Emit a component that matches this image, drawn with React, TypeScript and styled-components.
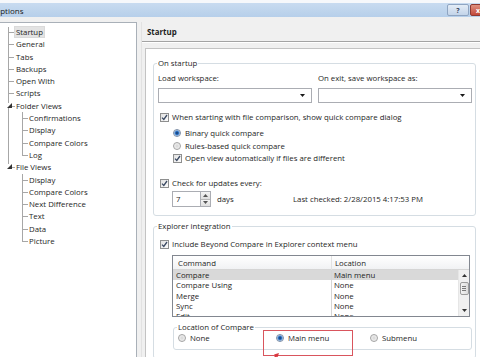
import React from 'react';
import styled, { createGlobalStyle } from 'styled-components';

const GlobalStyle = createGlobalStyle`
  html, body {
    margin: 0;
    padding: 0;
    background: #f0f0f0;
  }
  body {
    font-family: 'Open Sans', 'Noto Sans', sans-serif;
  }
  * {
    box-sizing: border-box;
  }
`;

const Window = styled.div`
  position: relative;
  width: 480px;
  height: 357px;
  overflow: hidden;
  display: flex;
  flex-direction: column;
  background: #f0f0f0;
  border-top: 3px solid #f6f8fb;
  color: #1e1e1e;
  font-size: 7.8px;
`;

const TitleBar = styled.div`
  flex: none;
  height: 14px;
  display: flex;
  align-items: center;
  justify-content: space-between;
  background: linear-gradient(#c8dbf0, #b6cfea);
`;

const TitleText = styled.span`
  margin-left: -6px;
  font-size: 8px;
  color: #1a1a1a;
`;

const CaptionButtons = styled.div`
  display: flex;
  gap: 1px;
  margin-right: -6px;
  align-self: flex-start;
  margin-top: 1px;
`;

const CaptionButton = styled.div<{ $close?: boolean }>`
  width: ${(p) => (p.$close ? '16px' : '22px')};
  height: 12px;
  border: 1px solid ${(p) => (p.$close ? '#8d3a32' : '#8fa5c2')};
  border-radius: 2px;
  background: ${(p) =>
    p.$close ? 'linear-gradient(#e0917f, #c2483a)' : 'linear-gradient(#e3ecf6, #c3d4e9)'};
  color: ${(p) => (p.$close ? '#fff' : '#34475f')};
  font-size: 7px;
  font-weight: bold;
  display: flex;
  align-items: center;
  justify-content: center;
  line-height: 1;
`;

const Body = styled.div`
  flex: 1;
  display: flex;
  padding-top: 5px;
  min-height: 0;
`;

/* ---------- tree ---------- */

const TreePanel = styled.div`
  flex: none;
  width: 137px;
  background: #fff;
  border: 1px solid #a9b0b8;
  border-left: none;
  border-bottom: none;
  padding-top: 3px;
`;

const TreeList = styled.ul`
  list-style: none;
  margin: 0;
  padding: 0;
`;

const TreeItem = styled.li<{ $indent: number; $last?: boolean }>`
  position: relative;
  &::before {
    content: '';
    position: absolute;
    left: ${(p) => (p.$indent ? 22 : 8)}px;
    top: ${(p) => (p.$indent ? 0 : 1)}px;
    height: ${(p) => (p.$last ? '6px' : '100%')};
    border-left: 1px solid #a7a7a7;
  }
`;

const TreeLabel = styled.div<{ $indent: number; $expander?: boolean }>`
  position: relative;
  height: 12.3px;
  line-height: 12.3px;
  padding-left: ${(p) => (p.$indent ? 29 : 16)}px;
  white-space: nowrap;
  &::before {
    content: '';
    position: absolute;
    left: ${(p) => (p.$indent ? 22 : p.$expander ? 12 : 8)}px;
    top: 6px;
    width: ${(p) => (p.$expander ? 3 : 6)}px;
    border-top: 1px solid #a7a7a7;
  }
`;

const TreeText = styled.span<{ $selected?: boolean }>`
  padding: 0 1px;
  margin-left: -1px;
  background: ${(p) => (p.$selected ? '#e3e3e3' : 'transparent')};
  outline: ${(p) => (p.$selected ? '1px solid #dadada' : 'none')};
`;

const Expander = styled.svg`
  position: absolute;
  left: 7px;
  top: 3px;
  width: 5px;
  height: 5px;
  background: #fff;
`;

/* ---------- right pane ---------- */

const RightPane = styled.div`
  flex: 1;
  display: flex;
  flex-direction: column;
  margin-left: 4px;
  border-left: 1px solid #e2e2e2;
  padding-left: 3px;
  min-width: 0;
`;

const PageHeader = styled.div`
  flex: none;
  height: 20px;
  line-height: 21px;
  padding-left: 5px;
  font-weight: bold;
  font-size: 7.9px;
  margin-left: -3px;
  border-bottom: 1px solid #a3a3a3;
  box-shadow: 0 1px 0 #ffffff;
`;

const ContentPanel = styled.div`
  flex: 1;
  margin-top: 6px;
  margin-right: -5px;
  background: #fff;
  border: 1px solid #c3c3c3;
  border-bottom: none;
  padding: 9px 8px 0 7px;
`;

const GroupBox = styled.fieldset<{ $gap?: number }>`
  margin: ${(p) => p.$gap ?? 0}px 0 0 0;
  padding: 0 3px 8px 4px;
  border: 1px solid #d5dde3;
  border-radius: 3px;
  min-width: 0;
`;

const InnerGroup = styled(GroupBox)`
  margin: 5px 0 0 15px;
  padding: 0 4px 5px 4px;
`;

const Legend = styled.legend`
  padding: 0 1px;
  margin-left: -1px;
  line-height: 10px;
  height: 10px;
`;

const ComboRow = styled.div`
  display: grid;
  grid-template-columns: 154px 154px;
  column-gap: 6px;
  margin-top: 5px;
`;

const FieldLabel = styled.div`
  line-height: 10px;
  height: 10px;
`;

const Combo = styled.div`
  margin-top: 5px;
  height: 15px;
  border: 1px solid #abadb3;
  background: #fff;
  display: flex;
  align-items: center;
  justify-content: flex-end;
  padding-right: 6px;
`;

const Arrow = styled.svg`
  width: 5px;
  height: 3px;
`;

const OptionRow = styled.div<{ $top: number; $indent?: number }>`
  display: flex;
  align-items: center;
  gap: 3px;
  height: 12px;
  margin-top: ${(p) => p.$top}px;
  margin-left: ${(p) => p.$indent ?? 2}px;
  white-space: nowrap;
`;

const CheckBox = styled.span`
  flex: none;
  width: 9px;
  height: 9px;
  border: 1px solid #8e8f8f;
  background: linear-gradient(135deg, #e2e2e2, #fbfbfb);
  display: flex;
  align-items: center;
  justify-content: center;
`;

const Radio = styled.span<{ $on?: boolean }>`
  flex: none;
  width: 8px;
  height: 8px;
  border-radius: 50%;
  border: 1px solid ${(p) => (p.$on ? '#7d8ea6' : '#a2a2a2')};
  background: ${(p) =>
    p.$on
      ? 'radial-gradient(circle, #0f2f58 0, #2c6fc0 1.6px, #8fb8e6 2.6px, #e6edf5 3.2px)'
      : 'radial-gradient(circle, #d5d5d5 0, #ececec 2.5px, #f8f8f8 4px)'};
  margin-right: 1px;
`;

const SpinRow = styled.div`
  display: flex;
  align-items: center;
  margin: 2px 0 0 14px;
  height: 16px;
  white-space: nowrap;
`;

const SpinGroup = styled.div`
  flex: none;
  width: 121px;
  display: flex;
  align-items: center;
`;

const SpinInput = styled.div`
  width: 28px;
  height: 16px;
  border: 1px solid #abadb3;
  border-right: none;
  background: #fff;
  padding-left: 3px;
  line-height: 14px;
`;

const SpinButtons = styled.div`
  width: 11px;
  height: 16px;
  display: flex;
  flex-direction: column;
  border: 1px solid #abadb3;
`;

const SpinHalf = styled.div`
  flex: 1;
  display: flex;
  align-items: center;
  justify-content: center;
  background: linear-gradient(#f4f4f4, #dedede);
  & + & {
    border-top: 1px solid #b8b8b8;
  }
`;

const Days = styled.span`
  margin-left: 6px;
`;

const ListView = styled.div`
  margin: 5px 0 0 14px;
  width: 298px;
  height: 62px;
  border: 1px solid #828790;
  background: #fff;
  display: flex;
  flex-direction: column;
  overflow: hidden;
`;

const ListHeader = styled.div`
  flex: none;
  height: 14px;
  display: grid;
  grid-template-columns: 158px 1fr;
  background: linear-gradient(#ffffff, #f1f2f4);
  border-bottom: 1px solid #d5d5d5;
`;

const HeaderCell = styled.div<{ $pad: number }>`
  padding-left: ${(p) => p.$pad}px;
  line-height: 14px;
  & + & {
    border-left: 1px solid #e2e2e2;
  }
`;

const ListBody = styled.div`
  flex: 1;
  display: flex;
  min-height: 0;
`;

const Rows = styled.div`
  flex: 1;
`;

const Row = styled.div<{ $selected?: boolean }>`
  display: grid;
  grid-template-columns: 158px 1fr;
  height: 10.3px;
  line-height: 10.3px;
  background: ${(p) => (p.$selected ? '#d9d9d9' : 'transparent')};
`;

const Cell = styled.div<{ $pad: number }>`
  padding-left: ${(p) => p.$pad}px;
  white-space: nowrap;
  & + & {
    border-left: 1px solid #d6d6d6;
  }
`;

const ScrollBar = styled.div`
  flex: none;
  width: 11px;
  background: #f0f0f0;
  border-left: 1px solid #e6e6e6;
  display: flex;
  flex-direction: column;
  align-items: center;
`;

const ScrollArrow = styled.div`
  height: 11px;
  display: flex;
  align-items: center;
  justify-content: center;
`;

const Thumb = styled.div`
  margin-top: 1px;
  width: 9px;
  height: 13px;
  border: 1px solid #9c9c9c;
  border-radius: 2px;
  background: linear-gradient(90deg, #f3f3f3, #dcdcdc);
  display: flex;
  flex-direction: column;
  align-items: center;
  justify-content: center;
  gap: 1px;
`;

const Grip = styled.span`
  width: 4px;
  border-top: 1px solid #7a7a7a;
`;

const ScrollTrack = styled.div`
  flex: 1;
`;

const RadioGrid = styled.div`
  display: grid;
  grid-template-columns: 98px 94px 1fr;
  height: 12px;
`;

const Highlight = styled.div`
  position: absolute;
  left: 263px;
  top: 327px;
  width: 90px;
  height: 26px;
  border: 1px solid #d9555d;
`;

const Pointer = styled.svg`
  position: absolute;
  left: 269px;
  top: 349px;
`;

const CheckMark = () => (
  <svg width="7" height="7" viewBox="0 0 7 7">
    <path d="M1 3.6 L2.8 5.4 L6 1" fill="none" stroke="#3b4a63" strokeWidth="1.3" />
  </svg>
);

const Down = ({ color = '#1a1a1a' }: { color?: string }) => (
  <Arrow viewBox="0 0 5 3">
    <path d="M0 0 H5 L2.5 3 Z" fill={color} />
  </Arrow>
);

const Up = ({ color = '#1a1a1a' }: { color?: string }) => (
  <Arrow viewBox="0 0 5 3">
    <path d="M0 3 H5 L2.5 0 Z" fill={color} />
  </Arrow>
);

type Node = { label: string; selected?: boolean; children?: string[] };

const tree: Node[] = [
  { label: 'Startup', selected: true },
  { label: 'General' },
  { label: 'Tabs' },
  { label: 'Backups' },
  { label: 'Open With' },
  { label: 'Scripts' },
  { label: 'Folder Views', children: ['Confirmations', 'Display', 'Compare Colors', 'Log'] },
  {
    label: 'File Views',
    children: ['Display', 'Compare Colors', 'Next Difference', 'Text', 'Data', 'Picture'],
  },
];

const commands = [
  ['Compare', 'Main menu'],
  ['Compare Using', 'None'],
  ['Merge', 'None'],
  ['Sync', 'None'],
  ['Edit', 'None'],
];

const Tree = () => (
  <TreeList>
    {tree.map((n, i) => (
      <TreeItem key={n.label} $indent={0} $last={i === tree.length - 1}>
        <TreeLabel $indent={0} $expander={!!n.children}>
          {n.children && (
            <Expander viewBox="0 0 5 5">
              <path d="M5 0 V5 H0 Z" fill="#333" />
            </Expander>
          )}
          <TreeText $selected={n.selected}>{n.label}</TreeText>
        </TreeLabel>
        {n.children && (
          <TreeList>
            {n.children.map((c, j) => (
              <TreeItem key={c + j} $indent={1} $last={j === n.children!.length - 1}>
                <TreeLabel $indent={1}>
                  <TreeText>{c}</TreeText>
                </TreeLabel>
              </TreeItem>
            ))}
          </TreeList>
        )}
      </TreeItem>
    ))}
  </TreeList>
);

const App: React.FC = () => {
  return (
    <Window>
      <GlobalStyle />
      <TitleBar>
        <TitleText>Options</TitleText>
        <CaptionButtons>
          <CaptionButton>?</CaptionButton>
          <CaptionButton $close>x</CaptionButton>
        </CaptionButtons>
      </TitleBar>
      <Body>
        <TreePanel>
          <Tree />
        </TreePanel>
        <RightPane>
          <PageHeader>Startup</PageHeader>
          <ContentPanel>
            <GroupBox>
              <Legend>On startup</Legend>
              <ComboRow>
                <div>
                  <FieldLabel>Load workspace:</FieldLabel>
                  <Combo>
                    <Down />
                  </Combo>
                </div>
                <div>
                  <FieldLabel>On exit, save workspace as:</FieldLabel>
                  <Combo>
                    <Down />
                  </Combo>
                </div>
              </ComboRow>
              <OptionRow $top={8}>
                <CheckBox>
                  <CheckMark />
                </CheckBox>
                When starting with file comparison, show quick compare dialog
              </OptionRow>
              <OptionRow $top={4} $indent={15}>
                <Radio $on />
                Binary quick compare
              </OptionRow>
              <OptionRow $top={1} $indent={15}>
                <Radio />
                Rules-based quick compare
              </OptionRow>
              <OptionRow $top={0} $indent={15}>
                <CheckBox>
                  <CheckMark />
                </CheckBox>
                Open view automatically if files are different
              </OptionRow>
              <OptionRow $top={13}>
                <CheckBox>
                  <CheckMark />
                </CheckBox>
                Check for updates every:
              </OptionRow>
              <SpinRow>
                <SpinGroup>
                  <SpinInput>7</SpinInput>
                  <SpinButtons>
                    <SpinHalf>
                      <Up color="#555" />
                    </SpinHalf>
                    <SpinHalf>
                      <Down color="#555" />
                    </SpinHalf>
                  </SpinButtons>
                  <Days>days</Days>
                </SpinGroup>
                <span>Last checked: 2/28/2015 4:17:53 PM</span>
              </SpinRow>
            </GroupBox>

            <GroupBox $gap={5}>
              <Legend>Explorer integration</Legend>
              <OptionRow $top={7}>
                <CheckBox>
                  <CheckMark />
                </CheckBox>
                Include Beyond Compare in Explorer context menu
              </OptionRow>
              <ListView>
                <ListHeader>
                  <HeaderCell $pad={5}>Command</HeaderCell>
                  <HeaderCell $pad={3}>Location</HeaderCell>
                </ListHeader>
                <ListBody>
                  <Rows>
                    {commands.map(([cmd, loc], i) => (
                      <Row key={cmd} $selected={i === 0}>
                        <Cell $pad={3}>{cmd}</Cell>
                        <Cell $pad={2}>{loc}</Cell>
                      </Row>
                    ))}
                  </Rows>
                  <ScrollBar>
                    <ScrollArrow>
                      <Up color="#333" />
                    </ScrollArrow>
                    <Thumb>
                      <Grip />
                      <Grip />
                      <Grip />
                    </Thumb>
                    <ScrollTrack />
                    <ScrollArrow>
                      <Down color="#333" />
                    </ScrollArrow>
                  </ScrollBar>
                </ListBody>
              </ListView>
              <InnerGroup>
                <Legend>Location of Compare</Legend>
                <RadioGrid>
                  <OptionRow $top={0} $indent={0}>
                    <Radio />
                    None
                  </OptionRow>
                  <OptionRow $top={0} $indent={0}>
                    <Radio $on />
                    Main menu
                  </OptionRow>
                  <OptionRow $top={0} $indent={0}>
                    <Radio />
                    Submenu
                  </OptionRow>
                </RadioGrid>
              </InnerGroup>
            </GroupBox>
          </ContentPanel>
        </RightPane>
      </Body>
      <Highlight />
      <Pointer width="14" height="9" viewBox="0 0 14 9">
        <path d="M2 9 L8 3" stroke="#d9363e" strokeWidth="1.4" />
        <path d="M10 1 L5 2.6 L8.4 5.6 Z" fill="#d9363e" />
      </Pointer>
    </Window>
  );
};

export default App;
